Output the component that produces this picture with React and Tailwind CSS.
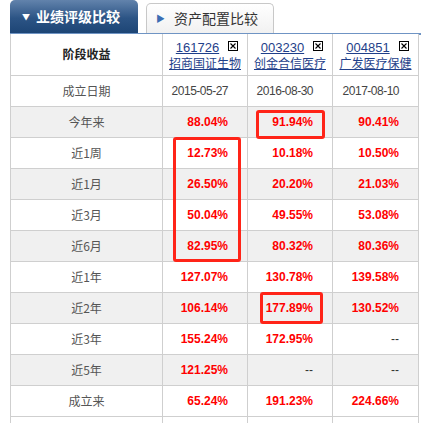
import React from 'react'

// ── Data ──────────────────────────────────────────────────────────────────────

const FUNDS = [
  { code: '161726', name: '招商国证生物' },
  { code: '003230', name: '创金合信医疗' },
  { code: '004851', name: '广发医疗保健' },
]

const ROWS = [
  { label: '成立日期', vals: ['2015-05-27', '2016-08-30', '2017-08-10'], date: true },
  { label: '今年来', vals: ['88.04%', '91.94%', '90.41%'] },
  { label: '近1周', vals: ['12.73%', '10.18%', '10.50%'] },
  { label: '近1月', vals: ['26.50%', '20.20%', '21.03%'] },
  { label: '近3月', vals: ['50.04%', '49.55%', '53.08%'] },
  { label: '近6月', vals: ['82.95%', '80.32%', '80.36%'] },
  { label: '近1年', vals: ['127.07%', '130.78%', '139.58%'] },
  { label: '近2年', vals: ['106.14%', '177.89%', '130.52%'] },
  { label: '近3年', vals: ['155.24%', '172.95%', '--'] },
  { label: '近5年', vals: ['121.25%', '--', '--'] },
  { label: '成立来', vals: ['65.24%', '191.23%', '224.66%'] },
]

const CJK = { fontFamily: '"Noto Sans CJK SC", "Noto Sans", sans-serif' }
const NUM = { fontFamily: '"Liberation Sans", Arial, sans-serif' }

// ── Small pieces ──────────────────────────────────────────────────────────────

function CloseBox() {
  return (
    <svg width="10" height="10" viewBox="0 0 10 10" className="ml-[9px] mt-[1px] shrink-0">
      <rect x="0.5" y="0.5" width="9" height="9" fill="#fff" stroke="#000" strokeWidth="1" />
      <path d="M2.5 2.5 L7.5 7.5 M7.5 2.5 L2.5 7.5" stroke="#000" strokeWidth="1.1" />
    </svg>
  )
}

function ValueCell({ v, date }) {
  if (date) {
    return <td className="border border-[#cfcfcf] pr-[19px] text-right text-[12px] tracking-[-0.5px] text-[#444]" style={NUM}>{v}</td>
  }
  if (v === '--') {
    return <td className="border border-[#cfcfcf] pr-[19px] text-right text-[12px] text-[#333]" style={NUM}>--</td>
  }
  return <td className="border border-[#cfcfcf] pr-[19px] text-right text-[12px] font-bold text-[#ff0000]" style={NUM}>{v}</td>
}

// ── Main ──────────────────────────────────────────────────────────────────────

export default function App() {
  return (
    <div className="relative w-[421px] h-[423px] overflow-hidden bg-white">
      {/* Tabs */}
      <div className="flex items-end h-[33px] pl-[10px]">
        <div
          className="flex items-center w-[128px] h-[33px] rounded-t-[5px] pl-[12px] text-white text-[14px] font-bold"
          style={{ ...CJK, background: 'linear-gradient(#6283ac, #2c5485 55%, #1d4575)' }}
        >
          <span className="text-[8px] mr-[6px] leading-none">▼</span>
          业绩评级比较
        </div>
        <div
          className="flex items-center ml-[8px] w-[128px] h-[30px] rounded-t-[5px] border border-b-0 border-[#c8c8c8] pl-[9px] text-[14px] text-[#333]"
          style={{ ...CJK, background: 'linear-gradient(#ffffff, #f1f1f1)' }}
        >
          <span className="text-[9px] text-[#3b6db3] mr-[9px] leading-none">▶</span>
          资产配置比较
        </div>
      </div>
      <div className="ml-[10px] h-[2px] bg-[#6f94c4]" />

      {/* Table */}
      <table className="ml-[10px] border-collapse table-fixed w-[408px] -mt-px">
        <colgroup>
          <col className="w-[152px]" />
          <col className="w-[85px]" />
          <col className="w-[85px]" />
          <col className="w-[86px]" />
        </colgroup>
        <thead>
          <tr className="h-[41px] bg-white">
            <th className="border border-[#cfcfcf] border-t-0 text-[12px] font-bold text-[#222]" style={CJK}>阶段收益</th>
            {FUNDS.map(f => (
              <th key={f.code} className="border border-[#cfcfcf] border-t-0 font-normal align-middle">
                <div className="flex flex-col items-center leading-[15px] pt-[2px]">
                  <div className="flex items-start pl-[4px]">
                    <span className="text-[13px] text-[#1f3f8a] underline underline-offset-[1px]" style={NUM}>{f.code}</span>
                    <CloseBox />
                  </div>
                  <span className="text-[12px] text-[#1f3f8a] underline underline-offset-[1px]" style={CJK}>{f.name}</span>
                </div>
              </th>
            ))}
          </tr>
        </thead>
        <tbody>
          {ROWS.map((r, i) => (
            <tr key={r.label} className={i % 2 === 1 ? 'h-[31px] bg-[#f0f0f0]' : 'h-[31px] bg-white'}>
              <td className="border border-[#cfcfcf] text-center text-[12px] text-[#555]" style={CJK}>{r.label}</td>
              {r.vals.map((v, j) => <ValueCell key={j} v={v} date={r.date} />)}
            </tr>
          ))}
          <tr className="h-[31px] bg-white">
            <td className="border border-[#cfcfcf]" />
            <td className="border border-[#cfcfcf]" />
            <td className="border border-[#cfcfcf]" />
            <td className="border border-[#cfcfcf]" />
          </tr>
        </tbody>
      </table>

      {/* Red highlight boxes drawn over the table */}
      <div className="absolute left-[173px] top-[137px] w-[68px] h-[125px] border-[3px] border-[#ff2418] rounded-[3px]" />
      <div className="absolute left-[256px] top-[110px] w-[69px] h-[29px] border-[3px] border-[#ff2418] rounded-[3px]" />
      <div className="absolute left-[260px] top-[292px] w-[63px] h-[32px] border-[3px] border-[#ff2418] rounded-[3px]" />
    </div>
  )
}
